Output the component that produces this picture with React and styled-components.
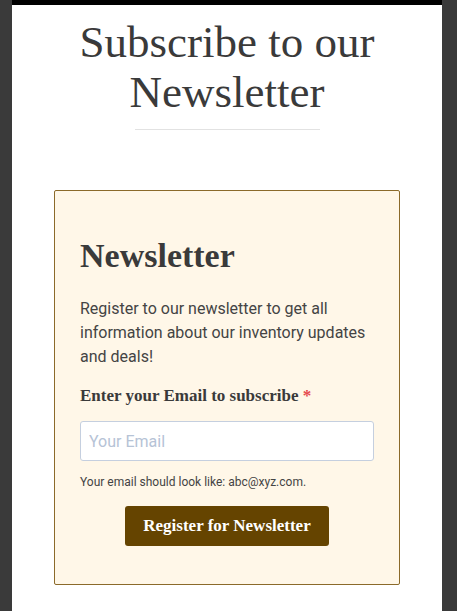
import React from "react";
import styled, { createGlobalStyle } from "styled-components";

const GlobalStyle = createGlobalStyle`
  html, body {
    margin: 0;
    padding: 0;
    background: #3a3a3a;
  }
  * {
    box-sizing: border-box;
  }
`;

const Page = styled.div`
  display: flex;
  padding-left: 12px;
  min-height: 611px;
`;

const Panel = styled.main`
  width: 430px;
  background: #ffffff;
  border-top: 5px solid #000000;
  padding: 12px 0 40px;
  display: flex;
  flex-direction: column;
  align-items: center;
`;

const Title = styled.h1`
  margin: 0;
  font-family: "Liberation Serif", "DejaVu Serif", serif;
  font-weight: 400;
  font-size: 45px;
  line-height: 50px;
  color: #3a3a3a;
  text-align: center;
`;

const Divider = styled.hr`
  width: 185px;
  border: 0;
  border-top: 1px solid #e2e2e2;
  margin: 12px 0 60px;
`;

const Card = styled.section`
  width: 346px;
  background: #fff7e8;
  border: 1px solid #8b6a2a;
  border-radius: 2px;
  padding: 45px 25px 38px;
  display: flex;
  flex-direction: column;
`;

const CardTitle = styled.h2`
  margin: 0 0 21px;
  font-family: "Liberation Serif", "DejaVu Serif", serif;
  font-weight: 700;
  font-size: 34px;
  line-height: 40px;
  color: #3a3a3a;
`;

const Text = styled.p`
  margin: 0 0 15px;
  font-family: Roboto, "Liberation Sans", sans-serif;
  font-size: 16px;
  line-height: 24px;
  color: #444444;
`;

const Label = styled.label`
  font-family: "Liberation Serif", "DejaVu Serif", serif;
  font-weight: 700;
  font-size: 17px;
  line-height: 24px;
  color: #3a3a3a;
  margin-bottom: 13px;

  span {
    color: #e5484d;
  }
`;

const Input = styled.input`
  width: 100%;
  height: 40px;
  border: 1px solid #c5cfdf;
  border-radius: 3px;
  background: #ffffff;
  padding: 0 8px;
  font-family: Roboto, "Liberation Sans", sans-serif;
  font-size: 16px;
  color: #333;
  outline: none;

  &::placeholder {
    color: #b6c3d6;
  }
`;

const Help = styled.div`
  margin-top: 13px;
  font-family: Roboto, "Liberation Sans", sans-serif;
  font-size: 12px;
  line-height: 16px;
  color: #444444;
`;

const Button = styled.button`
  align-self: center;
  margin-top: 16px;
  width: 204px;
  height: 40px;
  border: 0;
  border-radius: 3px;
  background: #654400;
  color: #ffffff;
  font-family: "Liberation Serif", "DejaVu Serif", serif;
  font-weight: 700;
  font-size: 17px;
  cursor: pointer;
`;

export default function App() {
  return (
    <>
      <GlobalStyle />
      <Page>
        <Panel>
          <Title>
            Subscribe to our
            <br />
            Newsletter
          </Title>
          <Divider />
          <Card>
            <CardTitle>Newsletter</CardTitle>
            <Text>
              Register to our newsletter to get all information about our
              inventory updates and deals!
            </Text>
            <Label htmlFor="email">
              Enter your Email to subscribe <span>*</span>
            </Label>
            <Input id="email" type="email" placeholder="Your Email" />
            <Help>Your email should look like: abc@xyz.com.</Help>
            <Button type="button">Register for Newsletter</Button>
          </Card>
        </Panel>
      </Page>
    </>
  );
}
